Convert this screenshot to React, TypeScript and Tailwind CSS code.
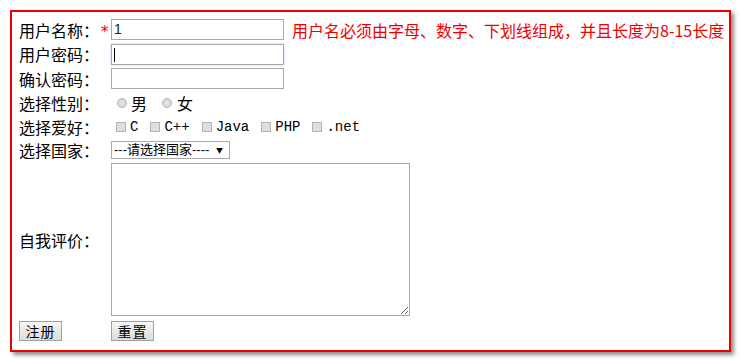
import type { ReactNode } from 'react';

function Row({ h, label, star, children }: { h: string; label?: string; star?: boolean; children?: ReactNode }) {
    return (
        <div className={`flex items-center ${h}`}>
            <div className="w-[92px] shrink-0 flex items-center text-[16px] leading-none">
                <span>{label}</span>
                {star && <span className="ml-[2px] text-[#e00] text-[15px] font-['DejaVu_Sans',sans-serif] translate-y-[3px]">*</span>}
            </div>
            <div className="flex items-center">{children}</div>
        </div>
    );
}

const inputCls = "w-[173px] h-[21px] border border-[#a9a9a9] px-[2px] text-[14px] font-['Liberation_Sans',sans-serif] text-[#222] outline-none bg-white";

const btnCls = "flex items-center justify-center w-[43px] h-[20px] border border-[#a0a0a0] bg-linear-to-b from-[#f7f7f7] to-[#dcdcdc] text-[14px] leading-none tracking-[1px]";

const hobbies = ['C', 'C++', 'Java', 'PHP', '.net'];

export default function App() {
    return (
        <div className="bg-white w-[741px] h-[363px] p-[10px] font-['Noto_Sans_CJK_SC',sans-serif] text-black">
            <form className="w-[721px] h-[342px] border-2 border-[#e00] shadow-[3px_3px_4px_rgba(0,0,0,0.45)] pt-[5px] pl-[7px] pb-[7px] flex flex-col">

                <Row h="h-[25px]" label="用户名称：" star>
                    <input className={inputCls} defaultValue="1" />
                    <span className="ml-[8px] text-[16px] leading-none text-[#e00] whitespace-nowrap">
                        用户名必须由字母、数字、下划线组成，并且长度为8-15长度
                    </span>
                </Row>

                <Row h="h-[24px]" label="用户密码：">
                    <div className="relative flex">
                        <input type="password" className={`${inputCls} border-[#7aa7e6] shadow-[0_0_2px_#a9c8f2]`} />
                        {/* caret */}
                        <span className="absolute left-[3px] top-[4px] w-px h-[14px] bg-black" />
                    </div>
                </Row>

                <Row h="h-[25px]" label="确认密码：">
                    <input type="password" className={inputCls} />
                </Row>

                <Row h="h-[24px]" label="选择性别：">
                    <label className="flex items-center ml-[6px] text-[16px] leading-none">
                        <input type="radio" name="sex" className="appearance-none w-[10px] h-[10px] rounded-full border border-[#b4b4b4] bg-radial from-[#e8e8e8] to-[#cfcfcf] mr-[4px]" />
                        男
                    </label>
                    <label className="flex items-center ml-[15px] text-[16px] leading-none">
                        <input type="radio" name="sex" className="appearance-none w-[10px] h-[10px] rounded-full border border-[#b4b4b4] bg-radial from-[#e8e8e8] to-[#cfcfcf] mr-[5px]" />
                        女
                    </label>
                </Row>

                <Row h="h-[24px]" label="选择爱好：">
                    <div className="flex items-center gap-[12px] ml-[5px] text-[14px] leading-none font-['Liberation_Mono',monospace]">
                        {hobbies.map((h) => (
                            <label key={h} className="flex items-center">
                                <input type="checkbox" className="appearance-none w-[10px] h-[10px] border border-[#b4b4b4] bg-[#dedede] mr-[4px]" />
                                {h}
                            </label>
                        ))}
                    </div>
                </Row>

                <Row h="h-[21px]" label="选择国家：">
                    <div className="relative flex">
                        <select className="appearance-none w-[119px] h-[18px] border border-[#a9a9a9] bg-white pl-[2px] text-[13px] leading-none font-['Liberation_Sans','Noto_Sans_CJK_SC',sans-serif] outline-none">
                            <option>---请选择国家----</option>
                            <option>中国</option>
                            <option>美国</option>
                        </select>
                        <span className="absolute right-[7px] top-[4px] text-[7px] leading-[10px] pointer-events-none">▼</span>
                    </div>
                </Row>

                <Row h="h-[159px]" label="自我评价：">
                    <textarea className="w-[299px] h-[153px] border border-[#a9a9a9] outline-none" />
                </Row>

                <div className="flex items-center h-[24px]">
                    <div className="w-[92px] shrink-0 flex">
                        <button type="submit" className={btnCls}>注册</button>
                    </div>
                    <button type="reset" className={btnCls}>重置</button>
                </div>

            </form>
        </div>
    );
}
